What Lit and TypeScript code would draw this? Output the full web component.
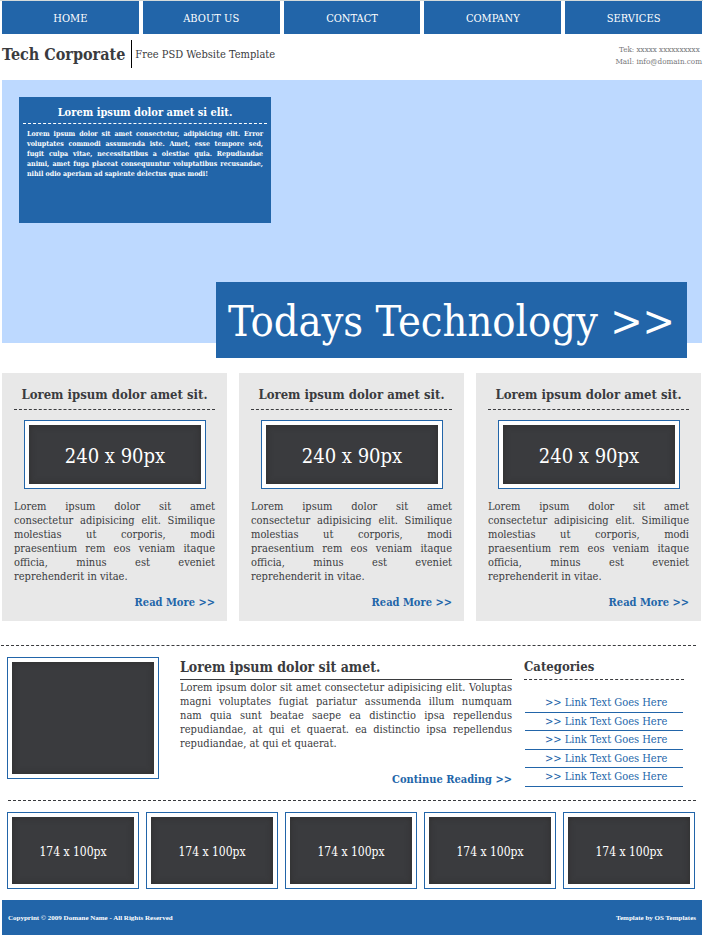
import { LitElement, html, css } from "lit";
import { customElement } from "lit/decorators.js";

const NAV = ["HOME", "ABOUT US", "CONTACT", "COMPANY", "SERVICES"];
const CARDS = [1, 2, 3];
const LINKS = [1, 2, 3, 4, 5];
const THUMBS = [1, 2, 3, 4, 5];

@customElement("app-root")
export class AppRoot extends LitElement {
  static styles = css`
    :host {
      --blue: #2265a9;
      --ink: #3a3b3e;
      display: block;
      border-top: 1px solid #d5dbdb;
      background: #fff;
      color: var(--ink);
      font-family: "DejaVu Serif Condensed", "DejaVu Serif", serif;
      font-size: 11px;
      line-height: 14px;
    }
    * {
      box-sizing: border-box;
    }
    h1, h2, h3, p, ul {
      margin: 0;
      padding: 0;
    }
    a {
      color: var(--blue);
      text-decoration: none;
    }
    .nav {
      display: flex;
      gap: 4px;
      padding: 0 1px 0 2px;
    }
    .nav a {
      flex: 1;
      padding-top: 2px;
      background: var(--blue);
      color: #fff;
      text-align: center;
      line-height: 31px;
    }
    .header {
      display: flex;
      justify-content: space-between;
      align-items: flex-start;
      padding: 6px 1px 12px 2px;
    }
    .brand {
      display: flex;
    }
    .brand h1 {
      padding: 2px 6px 0 0;
      border-right: 1px solid #000;
      font-size: 16px;
      line-height: 26px;
    }
    .brand p {
      padding: 2px 0 0 3px;
      line-height: 26px;
    }
    .contact {
      padding-top: 4px;
      color: #77787b;
      font-size: 8px;
      line-height: 12px;
      font-style: normal;
      text-align: right;
    }
    .hero {
      position: relative;
      margin: 0 1px 0 2px;
      padding: 17px 17px 120px;
      background: #bdd9ff;
    }
    .panel {
      width: 36%;
      min-width: 252px;
      min-height: 126px;
      padding: 7px 4px;
      background: var(--blue);
      color: #fff;
    }
    .panel h2 {
      padding-bottom: 1px;
      border-bottom: 1px dashed #fff;
      font-size: 11px;
      line-height: 18px;
      text-align: center;
    }
    .panel p {
      padding: 5px 4px 0;
      font-size: 7px;
      line-height: 10px;
      font-weight: bold;
      text-align: justify;
    }
    .banner {
      position: absolute;
      right: 15px;
      bottom: -15px;
      padding: 2px 12px 0;
      background: var(--blue);
      color: #fff;
      font-size: 43px;
      line-height: 74px;
      white-space: nowrap;
    }
    .cards {
      display: grid;
      grid-template-columns: repeat(3, 1fr);
      gap: 12px;
      margin: 30px 2px 24px;
    }
    .card {
      display: flex;
      flex-direction: column;
      padding: 12px 12px 11px;
      background: #e8e8e8;
    }
    .card h2 {
      padding-bottom: 5px;
      border-bottom: 1px dashed var(--ink);
      font-size: 13px;
      line-height: 19px;
      text-align: center;
    }
    .frame {
      padding: 4px;
      border: 1px solid var(--blue);
      background: #fff;
    }
    .image {
      display: flex;
      align-items: center;
      justify-content: center;
      height: 100%;
      background: #3a3b3e;
      box-shadow: inset 0 0 6px #2e2d2d;
      color: #fff;
    }
    .card .frame {
      height: 69px;
      margin: 10px 9px 11px 10px;
    }
    .card .image {
      padding-top: 2px;
      font-size: 20px;
    }
    .card p, .article p {
      text-align: justify;
    }
    .more {
      align-self: flex-end;
      font-weight: bold;
    }
    .card .more {
      margin-top: 12px;
    }
    .rule {
      height: 0;
      border: 0;
      border-top: 1px dashed var(--ink);
      margin: 0 7px 0 1px;
    }
    .rule.inset {
      margin-left: 8px;
    }
    .feature {
      display: flex;
      padding: 11px 19px 13px 7px;
    }
    .feature .frame {
      flex: none;
      width: 152px;
      height: 122px;
    }
    .article {
      display: flex;
      flex: 1;
      flex-direction: column;
      justify-content: space-between;
      margin: 0 12px 0 21px;
    }
    .article h2 {
      padding-bottom: 2px;
      border-bottom: 1px solid var(--ink);
      font-size: 14px;
      line-height: 20px;
    }
    .article p {
      padding-top: 1px;
    }
    .side {
      display: flex;
      flex-direction: column;
      width: 160px;
    }
    .side h3 {
      padding-bottom: 2px;
      border-bottom: 1px dashed var(--ink);
      font-size: 13px;
      line-height: 20px;
    }
    .links {
      display: grid;
      grid-auto-rows: 1fr;
      height: 93px;
      margin: 14px 1px 0;
      list-style: none;
    }
    .links li {
      padding: 1px 0 0 20px;
      border-bottom: 1px solid var(--blue);
      line-height: 16px;
    }
    .thumbs {
      display: grid;
      grid-template-columns: repeat(5, 1fr);
      gap: 7px;
      margin: 11px 8px 11px 7px;
    }
    .thumbs .frame {
      height: 77px;
    }
    .thumbs .image {
      padding-top: 2px;
      font-size: 12px;
    }
    .footer {
      display: flex;
      justify-content: space-between;
      margin: 0 1px 0 2px;
      padding: 2px 6px 0;
      background: var(--blue);
      color: #fff;
      font-family: "Liberation Serif", serif;
      font-size: 7px;
      line-height: 33px;
      font-weight: bold;
    }
    .footer a {
      color: #fff;
    }
  `;

  render() {
    return html`
      <nav class="nav">${NAV.map((n) => html`<a href="#">${n}</a>`)}</nav>
      <header class="header">
        <div class="brand">
          <h1>Tech Corporate</h1>
          <p>Free PSD Website Template</p>
        </div>
        <address class="contact">
          <div>Tek: xxxxx xxxxxxxxxx&nbsp;</div>
          <div>Mail: info@domain.com</div>
        </address>
      </header>
      <section class="hero">
        <div class="panel">
          <h2>Lorem ipsum dolor amet si elit.</h2>
          <p>
            Lorem ipsum dolor sit amet consectetur, adipisicing elit. Error
            voluptates commodi assumenda iste. Amet, esse tempore sed, fugit
            culpa vitae, necessitatibus a olestiae quia. Repudiandae animi, amet
            fuga placeat consequuntur voluptatibus recusandae, nihil odio
            aperiam ad sapiente delectus quas modi!
          </p>
        </div>
        <a class="banner" href="#">Todays Technology &gt;&gt;</a>
      </section>
      <section class="cards">
        ${CARDS.map(
          () => html`
            <article class="card">
              <h2>Lorem ipsum dolor amet sit.</h2>
              <div class="frame"><div class="image">240 x 90px</div></div>
              <p>
                Lorem ipsum dolor sit amet consectetur adipisicing elit.
                Similique molestias ut corporis, modi praesentium rem eos veniam
                itaque officia, minus est eveniet reprehenderit&nbsp;in vitae.
              </p>
              <a class="more" href="#">Read More &gt;&gt;</a>
            </article>
          `
        )}
      </section>
      <hr class="rule" />
      <section class="feature">
        <div class="frame"><div class="image"></div></div>
        <article class="article">
          <div>
            <h2>Lorem ipsum dolor sit amet.</h2>
            <p>
              Lorem ipsum dolor sit amet consectetur adipisicing elit. Voluptas
              magni voluptates fugiat pariatur assumenda illum numquam
              nam&nbsp;quia sunt beatae saepe ea distinctio ipsa repellendus
              repudiandae, at qui et quaerat. ea distinctio ipsa repellendus
              repudiandae, at qui et quaerat.
            </p>
          </div>
          <a class="more" href="#">Continue Reading &gt;&gt;</a>
        </article>
        <aside class="side">
          <h3>Categories</h3>
          <ul class="links">
            ${LINKS.map(
              () => html`<li><a href="#">&gt;&gt; Link Text Goes Here</a></li>`
            )}
          </ul>
        </aside>
      </section>
      <hr class="rule inset" />
      <section class="thumbs">
        ${THUMBS.map(
          () =>
            html`<div class="frame"><div class="image">174 x 100px</div></div>`
        )}
      </section>
      <footer class="footer">
        <span>Copyprint © 2009 Domane Name - All Rights Reserved</span>
        <a href="#">Template by OS Templates</a>
      </footer>
    `;
  }
}
